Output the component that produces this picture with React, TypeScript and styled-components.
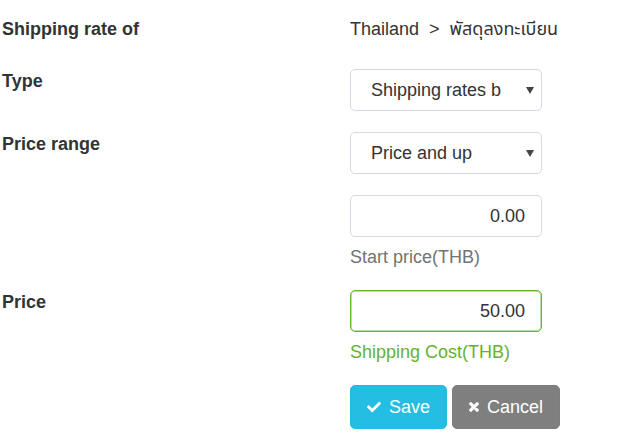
import React, { useState } from "react";
import styled, { createGlobalStyle } from "styled-components";
import { FaCheck } from "react-icons/fa";

const GlobalStyle = createGlobalStyle`
  html, body {
    margin: 0;
    padding: 0;
    background: #fff;
  }
  body {
    font-family: "Liberation Sans", Arial, "Noto Sans Thai", "DejaVu Sans", sans-serif;
    font-size: 18px;
    line-height: 25px;
    color: #333;
  }
`;

const Form = styled.form`
  padding: 17px 0 0 2px;
  display: flex;
  flex-direction: column;
`;

const Row = styled.div<{ $gap: number }>`
  display: flex;
  align-items: flex-start;
  margin-bottom: ${(p) => p.$gap}px;
`;

const Label = styled.label`
  width: 348px;
  flex: 0 0 348px;
  font-weight: 700;
  line-height: 25px;
`;

const Field = styled.div`
  width: 192px;
  display: flex;
  flex-direction: column;
`;

const Static = styled.div`
  white-space: nowrap;
  color: #333;
`;

const SelectWrap = styled.div`
  position: relative;
  width: 192px;
`;

const Select = styled.select`
  appearance: none;
  -webkit-appearance: none;
  width: 192px;
  height: 42px;
  box-sizing: border-box;
  border: 1px solid #d3d9e0;
  border-radius: 5px;
  background: #fff;
  padding: 0 40px 0 20px;
  font-family: inherit;
  font-size: 18px;
  color: #333;
  outline: none;
`;

const Arrow = styled.svg`
  position: absolute;
  right: 8px;
  top: 18px;
  width: 8px;
  height: 7px;
  pointer-events: none;
`;

const Input = styled.input<{ $ok?: boolean }>`
  width: 192px;
  height: 42px;
  box-sizing: border-box;
  border: 1px solid ${(p) => (p.$ok ? "#6ab52f" : "#d3d9e0")};
  box-shadow: ${(p) => (p.$ok ? "inset 0 0 0 1px rgba(106, 181, 47, 0.45)" : "none")};
  border-radius: 5px;
  padding: 0 16px;
  text-align: right;
  font-family: inherit;
  font-size: 18px;
  color: #333;
  outline: none;
  margin-top: ${(p) => (p.$ok ? 0 : 21)}px;
`;

const Help = styled.div<{ $ok?: boolean }>`
  margin-top: 8px;
  white-space: nowrap;
  color: ${(p) => (p.$ok ? "#66b22c" : "#737373")};
`;

const Actions = styled.div`
  display: flex;
  gap: 5px;
  padding-left: 348px;
`;

const Button = styled.button<{ $variant: "save" | "cancel" }>`
  height: 44px;
  box-sizing: border-box;
  display: inline-flex;
  align-items: center;
  gap: 8px;
  padding: 0 16px;
  border: 1px solid ${(p) => (p.$variant === "save" ? "#22bce0" : "#7d7d7d")};
  border-radius: 5px;
  background: ${(p) => (p.$variant === "save" ? "#23bee2" : "#7f7f7f")};
  color: #fff;
  font-family: inherit;
  font-size: 18px;
  cursor: pointer;
  svg {
    flex: none;
  }
`;

const DownArrow = () => (
  <Arrow viewBox="0 0 8 7">
    <path d="M0 0 H8 L4 7 Z" fill="#444" />
  </Arrow>
);

const BoldX = () => (
  <svg width="10" height="10" viewBox="0 0 10 10">
    <path
      d="M1.8 1.8 L8.2 8.2 M8.2 1.8 L1.8 8.2"
      stroke="#fff"
      strokeWidth="3.2"
      strokeLinecap="round"
    />
  </svg>
);

export default function App() {
  const [type, setType] = useState("weight");
  const [range, setRange] = useState("up");
  const [start, setStart] = useState("0.00");
  const [price, setPrice] = useState("50.00");

  return (
    <>
      <GlobalStyle />
      <Form onSubmit={(e) => e.preventDefault()}>
        <Row $gap={27}>
          <Label>Shipping rate of</Label>
          <Static>Thailand &nbsp;&gt;&nbsp; พัสดุลงทะเบียน</Static>
        </Row>
        <Row $gap={21}>
          <Label>Type</Label>
          <Field>
            <SelectWrap>
              <Select value={type} onChange={(e) => setType(e.target.value)}>
                <option value="weight">Shipping rates by weight</option>
                <option value="price">Shipping rates by price</option>
              </Select>
              <DownArrow />
            </SelectWrap>
          </Field>
        </Row>
        <Row $gap={20}>
          <Label>Price range</Label>
          <Field>
            <SelectWrap>
              <Select value={range} onChange={(e) => setRange(e.target.value)}>
                <option value="up">Price and up</option>
                <option value="between">Price between</option>
              </Select>
              <DownArrow />
            </SelectWrap>
            <Input value={start} onChange={(e) => setStart(e.target.value)} />
            <Help>Start price(THB)</Help>
          </Field>
        </Row>
        <Row $gap={20}>
          <Label>Price</Label>
          <Field>
            <Input $ok value={price} onChange={(e) => setPrice(e.target.value)} />
            <Help $ok>Shipping Cost(THB)</Help>
          </Field>
        </Row>
        <Actions>
          <Button type="submit" $variant="save">
            <FaCheck size={14} />
            Save
          </Button>
          <Button type="button" $variant="cancel">
            <BoldX />
            Cancel
          </Button>
        </Actions>
      </Form>
    </>
  );
}
